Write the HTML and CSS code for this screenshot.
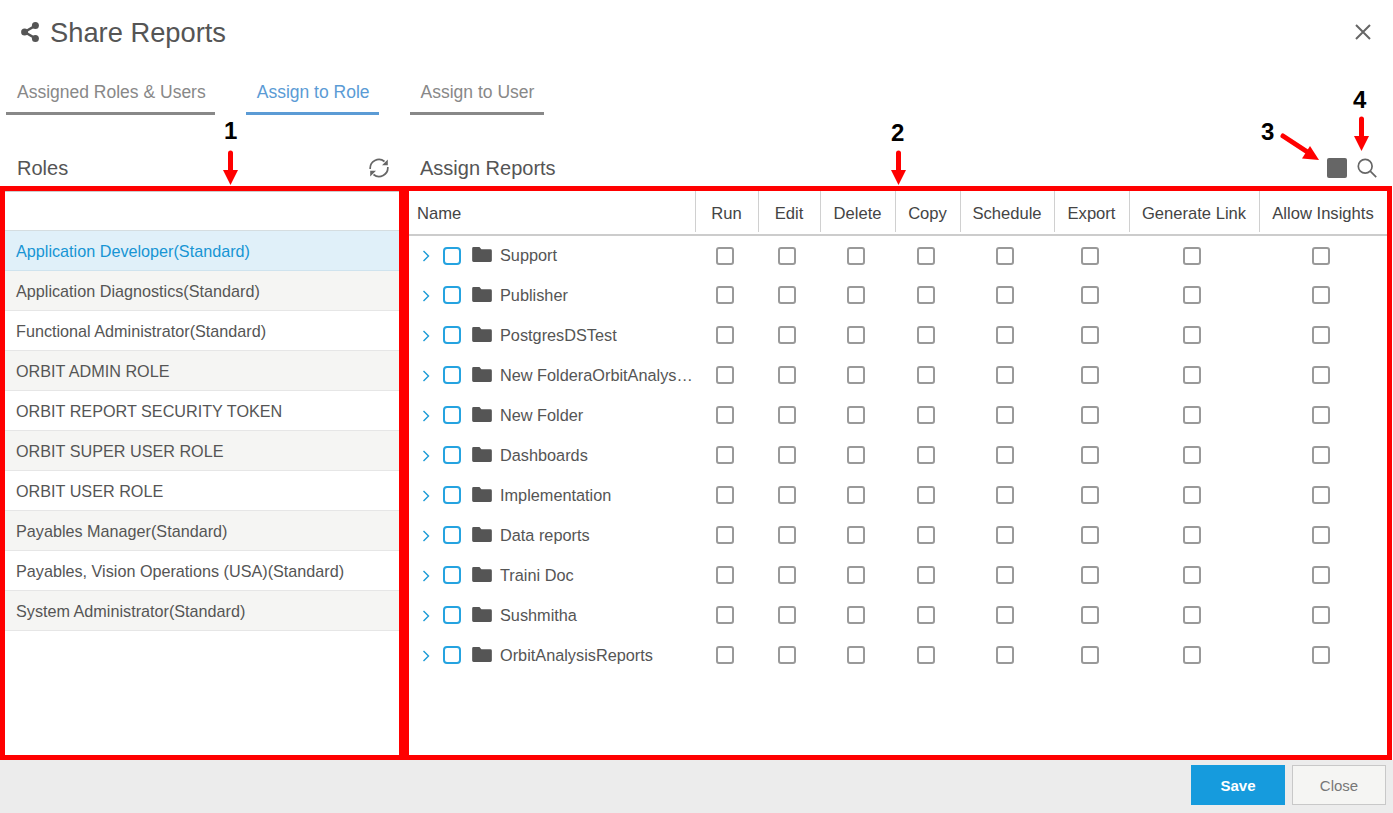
FILE: index.html
```html
<!DOCTYPE html>
<html lang="en">
<head>
    <meta charset="UTF-8">
    <meta name="viewport" content="width=device-width, initial-scale=1.0">
    <title>Share Reports</title>
    <link rel="stylesheet" href="styles.css">
</head>
<body>

<div class="dialog">
    <header class="dialog-header">
        <svg class="share-icon" viewBox="0 0 18 20" width="18" height="20">
            <circle cx="3.600" cy="10" r="3.500"/>
            <circle cx="14.400" cy="3.600" r="3.500"/>
            <circle cx="14.400" cy="16.400" r="3.500"/>
            <path d="M3.600 10 14.400 3.600M3.600 10l10.800 6.400" stroke="#555" stroke-width="2.400"/>
        </svg>
        <h1>Share Reports</h1>
        <svg class="close-icon" viewBox="0 0 16 16" width="16" height="16">
            <path d="M1 1l14 14M15 1 1 15"/>
        </svg>
    </header>

    <nav class="tabs">
        <a class="tab tab-first">Assigned Roles &amp; Users</a>
        <a class="tab tab-active">Assign to Role</a>
        <a class="tab tab-last">Assign to User</a>
    </nav>

    <div class="columns">
        <div class="col-head">
            <h2>Roles</h2>
            <svg class="refresh-icon" viewBox="0 0 20 20" width="20" height="20">
                <path d="M1.200 11A8.800 8.800 0 0 1 15.500 3.500M18.800 9A8.800 8.800 0 0 1 4.500 16.500"/>
                <path class="refresh-head" d="M18.800 1.500v5.800h-5.800zM1.200 18.500v-5.800h5.800z"/>
            </svg>
        </div>
        <div class="col-head col-head-right">
            <h2>Assign Reports</h2>
            <div class="tools">
                <span class="stop-btn"></span>
                <svg class="search-icon" viewBox="0 0 20 20" width="20" height="20">
                    <circle cx="8.200" cy="8.200" r="6.900"/>
                    <path d="M13.200 13.200l6 6"/>
                </svg>
            </div>
        </div>

        <section class="panel roles-panel">
            <div class="role-search"></div>
            <ul class="role-list">
                <li class="selected">Application Developer(Standard)</li>
                <li>Application Diagnostics(Standard)</li>
                <li>Functional Administrator(Standard)</li>
                <li>ORBIT ADMIN ROLE</li>
                <li>ORBIT REPORT SECURITY TOKEN</li>
                <li>ORBIT SUPER USER ROLE</li>
                <li>ORBIT USER ROLE</li>
                <li>Payables Manager(Standard)</li>
                <li>Payables, Vision Operations (USA)(Standard)</li>
                <li>System Administrator(Standard)</li>
            </ul>
        </section>

        <section class="panel reports-panel">
            <table class="reports">
                <colgroup>
                    <col class="c-name"><col class="c-run"><col class="c-edit"><col class="c-delete">
                    <col class="c-copy"><col class="c-schedule"><col class="c-export"><col class="c-link"><col class="c-insights">
                </colgroup>
                <thead>
                    <tr>
                        <th class="name-head">Name</th><th>Run</th><th>Edit</th><th>Delete</th><th>Copy</th><th>Schedule</th><th>Export</th><th>Generate Link</th><th>Allow Insights</th>
                    </tr>
                </thead>
                <tbody id="report-rows"></tbody>
            </table>
        </section>
    </div>

    <footer class="dialog-footer">
        <button type="button" class="btn btn-save">Save</button>
        <button type="button" class="btn btn-close">Close</button>
    </footer>
</div>

<!-- callouts drawn over the screenshot -->
<span class="callout-num num-1">1</span>
<span class="callout-num num-2">2</span>
<span class="callout-num num-3">3</span>
<span class="callout-num num-4">4</span>
<svg class="callouts" width="1393" height="813" viewBox="0 0 1393 813">
    <g stroke="#f00" stroke-width="5" stroke-linecap="round" fill="#f00">
        <path d="M230.500 153V176"/>
        <path d="M898.500 153V176"/>
        <path d="M1361.500 119V142"/>
        <path d="M1283 136 1309 153"/>
    </g>
    <g fill="#f00">
        <path d="M223 170h15l-7.500 15z"/>
        <path d="M891 170h15l-7.500 15z"/>
        <path d="M1354 136h15l-7.500 15z"/>
        <path d="M1319 160l-17-1.500 8-12.500z"/>
    </g>
</svg>

<script>
    var names = ['Support', 'Publisher', 'PostgresDSTest', 'New FolderaOrbitAnalys…', 'New Folder', 'Dashboards', 'Implementation', 'Data reports', 'Traini Doc', 'Sushmitha', 'OrbitAnalysisReports'];
    var html = '';
    names.forEach(function(name) {
        html += '<tr><td><div class="name-cell">' +
            '<svg class="chevron" viewBox="0 0 8 12" width="8" height="12"><path d="M1.500 1l5 5-5 5"/></svg>' +
            '<input type="checkbox" class="check check-blue">' +
            '<svg class="folder" viewBox="0 0 21 16" width="20" height="15"><path d="M1.500 0h6.300l2 2.400h9.700a1.500 1.500 0 0 1 1.500 1.500v10.600a1.500 1.500 0 0 1-1.500 1.500h-18a1.500 1.500 0 0 1-1.500-1.500v-13a1.500 1.500 0 0 1 1.500-1.500z"/></svg>' +
            '<span class="folder-name">' + name + '</span></div></td>';
        for (var i = 0; i < 8; i++) {
            html += '<td class="check-cell"><input type="checkbox" class="check"></td>';
        }
        html += '</tr>';
    });
    document.getElementById('report-rows').innerHTML = html;
</script>

</body>
</html>
```

FILE: styles.css
```css
* {
    box-sizing: border-box;
}

html, body {
    height: 100%;
}

body {
    margin: 0;
    font-family: "Liberation Sans", Arial, sans-serif;
    color: #555;
    background-color: #fff;
    overflow: hidden;
    position: relative;
}

.dialog {
    height: 813px;
    display: flex;
    flex-direction: column;
}

/* header */
.dialog-header {
    height: 64px;
    display: flex;
    align-items: center;
    padding: 0 22px 0 21px;
}

.dialog-header h1 {
    margin: 2px 0 0 11px;
    font-size: 27.300px;
    font-weight: normal;
    color: #555;
    flex: 1;
}

.share-icon {
    fill: #555;
}

.close-icon {
    stroke: #666;
    stroke-width: 2;
    fill: none;
}

/* tabs */
.tabs {
    display: flex;
    height: 51px;
    padding-left: 6px;
    gap: 31px;
}

.tab {
    display: block;
    padding: 17px 9px 0 11px;
    font-size: 17.500px;
    line-height: 22px;
    color: #888;
    border-bottom: 3px solid #888;
}

.tab-last {
    padding-right: 10px;
}

.tab-active {
    color: #5b9bd5;
    border-bottom-color: #5b9bd5;
}

/* two columns */
.columns {
    flex: 1;
    display: grid;
    grid-template-columns: 404px 989px;
    grid-template-rows: 71px 574px;
}

.col-head {
    display: flex;
    align-items: flex-end;
    justify-content: space-between;
    padding: 0 15px 6px 17px;
}

.col-head h2 {
    margin: 0;
    font-size: 20px;
    line-height: 24px;
    font-weight: normal;
    color: #555;
}

.col-head-right {
    padding: 0 16px 6px 16px;
}

.tools {
    display: flex;
    align-items: center;
    gap: 10px;
    margin-bottom: 2px;
}

.stop-btn {
    display: block;
    width: 20px;
    height: 20px;
    background-color: #666;
    border-radius: 2px;
}

.refresh-icon {
    stroke: #666;
    fill: none;
    stroke-width: 1.700;
    margin-bottom: 2px;
}

.refresh-head {
    fill: #666;
    stroke: none;
}

.search-icon {
    stroke: #666;
    fill: none;
    stroke-width: 1.700;
}

.panel {
    border: 5px solid #f00;
    background-color: #fff;
    overflow: hidden;
}

.reports-panel {
    margin-right: 1px;
}

/* roles list */
.role-search {
    height: 40px;
    border-top: 1px solid #ccc;
    border-bottom: 1px solid #d5dde0;
}

.role-list {
    list-style: none;
    margin: 0;
    padding: 0;
}

.role-list li {
    height: 40px;
    line-height: 41px;
    padding-left: 11px;
    font-size: 16.200px;
    color: #555;
    border-bottom: 1px solid #e6e6e6;
}

.role-list li:nth-child(even) {
    background-color: #f5f5f3;
}

.role-list li.selected {
    background-color: #e0f0f9;
    color: #1795d4;
    border-bottom-color: #cfe3ee;
}

/* reports table */
.reports {
    width: 100%;
    table-layout: fixed;
    border-collapse: collapse;
}

.c-name { width: 286px; }
.c-run { width: 63px; }
.c-edit { width: 62px; }
.c-delete { width: 75px; }
.c-copy { width: 65px; }
.c-schedule { width: 94px; }
.c-export { width: 75px; }
.c-link { width: 130px; }

.reports th {
    height: 44px;
    padding: 3px 0 0;
    font-size: 16.600px;
    font-weight: normal;
    color: #444;
    text-align: center;
    border-bottom: 2px solid #ccc;
    position: relative;
}

.reports th + th::before {
    content: "";
    position: absolute;
    left: 0;
    top: 0;
    bottom: 2px;
    border-left: 1px solid #d0d0d0;
}

.reports th.name-head {
    text-align: left;
    padding-left: 8px;
}

.reports td {
    height: 40px;
    padding: 0;
}

.name-cell {
    display: flex;
    align-items: center;
    padding-left: 13px;
}

.chevron {
    stroke: #1a9ad6;
    stroke-width: 1.400;
    fill: none;
    flex: none;
    margin-top: 1px;
}

.folder {
    fill: #555;
    flex: none;
    margin: 0 8px 2px 11px;
}

.folder-name {
    font-size: 16.300px;
    color: #555;
    white-space: nowrap;
}

.check-cell {
    text-align: center;
    padding-right: 4px !important;
}

.check {
    appearance: none;
    display: block;
    width: 18px;
    height: 18px;
    margin: 0;
    background-color: #fff;
    border: 2px solid #999;
    border-radius: 3px;
}

.check-cell .check {
    margin: 0 auto;
}

.check-blue {
    flex: none;
    margin-left: 13px;
    border-color: #25a3e0;
    border-radius: 4px;
}

/* footer */
.dialog-footer {
    flex: 1;
    display: flex;
    justify-content: flex-end;
    align-items: flex-start;
    gap: 7px;
    padding: 5px 7px 0 0;
    background-color: #ececec;
}

.btn {
    width: 94px;
    height: 40px;
    font-family: inherit;
    font-size: 15px;
    border-radius: 0;
    cursor: pointer;
}

.btn-save {
    background-color: #169bdd;
    color: #fff;
    font-weight: bold;
    border: none;
}

.btn-close {
    background-color: #f5f5f3;
    color: #777;
    border: 1px solid #c8c8c8;
}

/* callouts */
.callouts {
    position: absolute;
    left: 0;
    top: 0;
    pointer-events: none;
}

.callout-num {
    position: absolute;
    font-size: 24px;
    line-height: 24px;
    font-weight: bold;
    color: #000;
}

.num-1 { left: 224px; top: 119px; }
.num-2 { left: 891px; top: 121px; }
.num-3 { left: 1261px; top: 120px; }
.num-4 { left: 1353px; top: 88px; }
```
